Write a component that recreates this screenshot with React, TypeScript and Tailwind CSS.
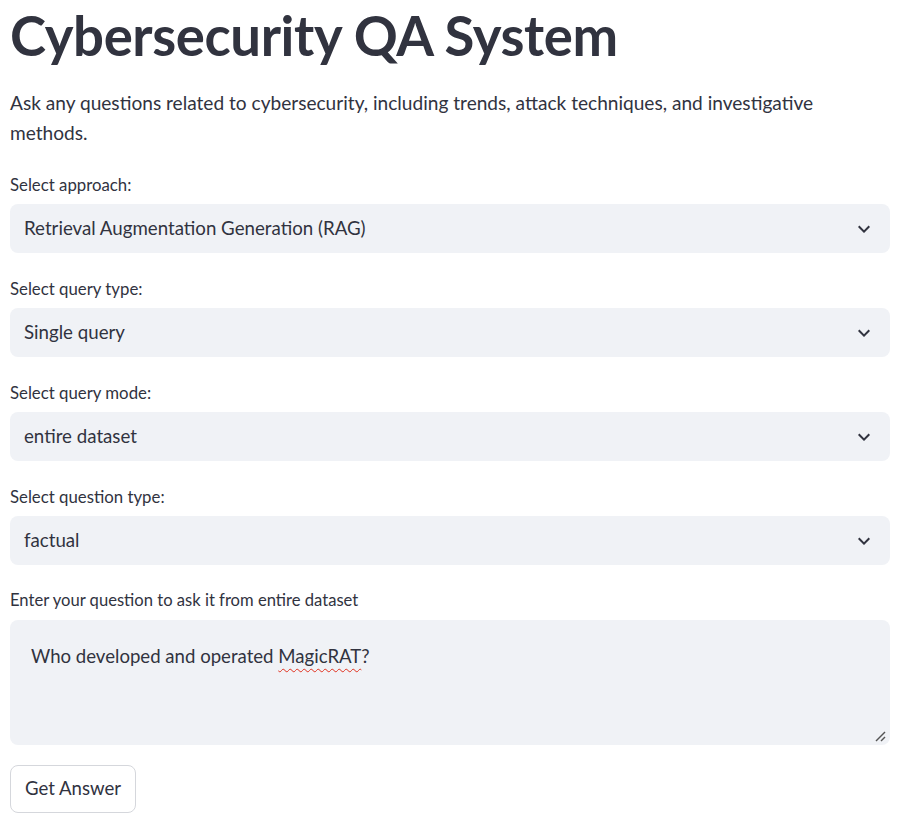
import React from "react"

const fields = [
  { label: "Select approach:", value: "Retrieval Augmentation Generation (RAG)" },
  { label: "Select query type:", value: "Single query" },
  { label: "Select query mode:", value: "entire dataset" },
  { label: "Select question type:", value: "factual" },
]

function Chevron() {
  return (
    <svg viewBox="0 0 24 24" className="w-6 h-6 fill-[#31333f]">
      <path d="M16.59 8.59L12 13.17 7.41 8.59 6 10l6 6 6-6z" />
    </svg>
  )
}

function SelectBox({ label, value }: { label: string; value: string }) {
  return (
    <div>
      <div className="h-[29px] mb-[5px] flex items-center text-[16.8px]">{label}</div>
      <div className="h-[49px] rounded-lg bg-[#f0f2f6] flex items-center justify-between pl-[14px] pr-[14px] text-[18.7px]">
        <span>{value}</span>
        <Chevron />
      </div>
    </div>
  )
}

export default function App() {
  return (
    <div className="min-h-[838px] bg-white pl-[10px] pr-[31px] text-[#31333f] font-['Lato',sans-serif]">
      <h1 className="font-bold text-[54.5px] leading-[70px] tracking-[-0.4px]">Cybersecurity QA System</h1>
      <p className="mt-[18px] text-[19.1px] leading-[30px] pr-[40px]">
        Ask any questions related to cybersecurity, including trends, attack techniques, and investigative methods.
      </p>

      <div className="mt-[22px] flex flex-col gap-[21px]">
        {fields.map((f) => (
          <SelectBox key={f.label} label={f.label} value={f.value} />
        ))}

        <div>
          <div className="h-[29px] mb-[5px] flex items-center text-[16.6px]">
            Enter your question to ask it from entire dataset
          </div>
          <div className="relative h-[125px] rounded-lg bg-[#f0f2f6] pl-[21px] pt-[22px] text-[18.6px] leading-[29px]">
            Who developed and operated{" "}
            <span className="underline decoration-wavy decoration-[#e0301e] decoration-1 underline-offset-[5px]">
              MagicRAT
            </span>
            ?
            <svg viewBox="0 0 12 12" className="absolute right-[3px] bottom-[2px] w-3 h-3 stroke-[#555] stroke-[1.4]">
              <line x1="1" y1="10" x2="10" y2="1" />
              <line x1="6" y1="10" x2="10" y2="6" />
            </svg>
          </div>
        </div>
      </div>

      <button className="mt-[20px] h-[48px] w-[126px] rounded-lg border border-[#d5d7dc] bg-white text-[18.6px]">
        Get Answer
      </button>
    </div>
  )
}
